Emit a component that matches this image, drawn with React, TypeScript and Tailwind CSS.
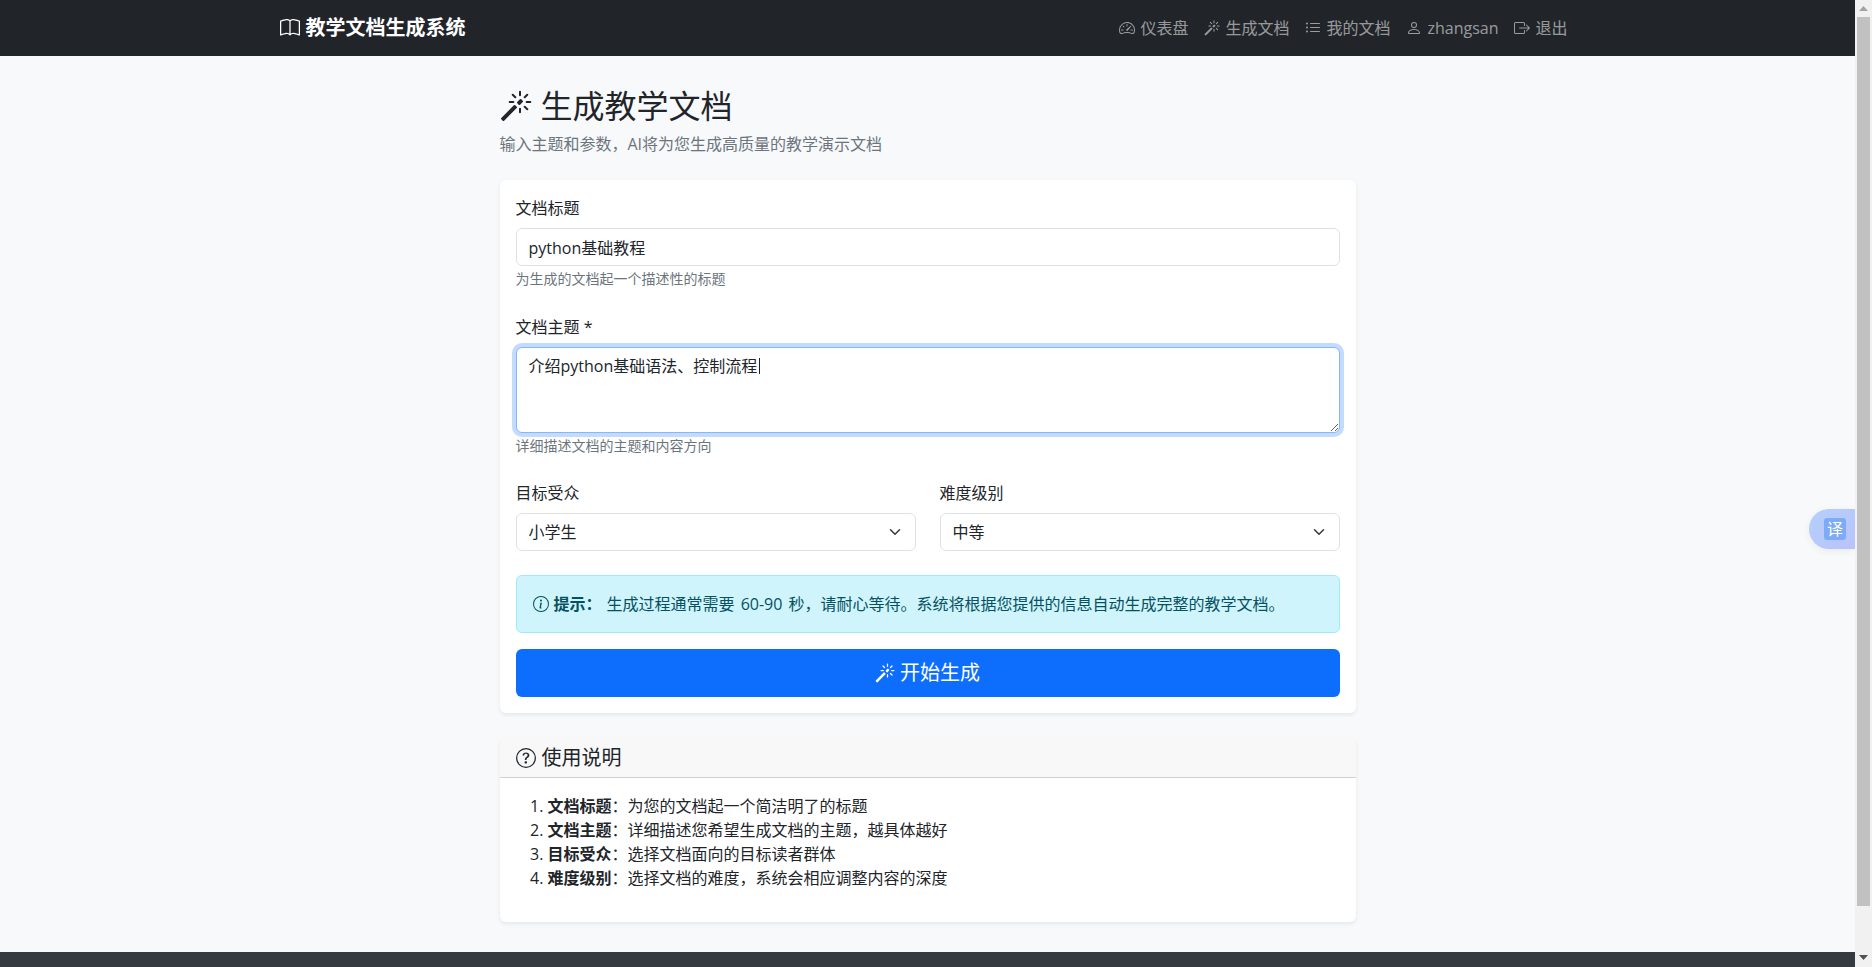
import { BsBook, BsSpeedometer2, BsMagic, BsListUl, BsPerson, BsBoxArrowRight, BsInfoCircle, BsQuestionCircle } from "react-icons/bs";

function NavLink({ icon, label }: { icon: React.ReactNode; label: string }) {
  return (
    <a className="flex items-center gap-[5px] p-2 text-[rgba(255,255,255,0.55)]">
      {icon}
      <span>{label}</span>
    </a>
  );
}

function Chevron() {
  return (
    <svg viewBox="0 0 16 16" className="pointer-events-none absolute right-[13px] top-[13px] h-3 w-4" fill="none" stroke="#343a40" strokeWidth="2" strokeLinecap="round" strokeLinejoin="round">
      <path d="m2 5 6 6 6-6" />
    </svg>
  );
}

function SelectField({ label, value }: { label: string; value: string }) {
  return (
    <div>
      <label className="mb-2 block">{label}</label>
      <div className="relative">
        <select defaultValue={value} className="block h-[38px] w-full appearance-none rounded-[6px] border border-[#dee2e6] bg-white pl-3 pr-9 text-[#212529] outline-none">
          <option>{value}</option>
        </select>
        <Chevron />
      </div>
    </div>
  );
}

export default function App() {
  return (
    <div className="flex h-screen w-full overflow-hidden bg-[#f8f9fa] font-['Open_Sans','Noto_Sans_CJK_SC',sans-serif] text-base leading-6 text-[#212529]">
      <div className="relative flex min-w-0 flex-1 flex-col overflow-hidden">
        <nav className="flex h-14 shrink-0 items-center justify-between bg-[#212529] pl-[279.5px] pr-[279.5px]">
          <a className="flex items-center gap-[6px] text-xl font-bold text-white">
            <BsBook size={20} />
            <span>教学文档生成系统</span>
          </a>
          <div className="flex items-center">
            <NavLink icon={<BsSpeedometer2 size={16} />} label="仪表盘" />
            <NavLink icon={<BsMagic size={16} />} label="生成文档" />
            <NavLink icon={<BsListUl size={16} />} label="我的文档" />
            <NavLink icon={<BsPerson size={16} />} label="zhangsan" />
            <NavLink icon={<BsBoxArrowRight size={16} />} label="退出" />
          </div>
        </nav>

        <main className="mx-auto w-[856px] shrink-0 pt-[26px]">
          <h2 className="flex h-[48px] items-center gap-[9px] text-[32px] font-normal leading-[48px]">
            <BsMagic size={32} />
            <span>生成教学文档</span>
          </h2>
          <p className="mt-[2px] text-[#6c757d]">输入主题和参数，AI将为您生成高质量的教学演示文档</p>

          <section className="mt-6 rounded-[6px] bg-white p-4 shadow-[0_2px_4px_rgba(0,0,0,0.075)]">
            <label className="mb-2 block">文档标题</label>
            <input defaultValue="python基础教程" className="block h-[38px] w-full rounded-[6px] border border-[#dee2e6] bg-white px-3 text-[#212529] outline-none" />
            <div className="mt-[2px] text-sm leading-[21px] text-[#6c757d]">为生成的文档起一个描述性的标题</div>

            <label className="mb-2 mt-[26px] block">文档主题 *</label>
            <div className="relative">
              <textarea rows={3} defaultValue="介绍python基础语法、控制流程" className="block h-[86px] w-full rounded-[6px] border border-[#86b7fe] bg-white px-3 py-[6px] text-[#212529] shadow-[0_0_0_4px_rgba(13,110,253,0.25)] outline-none" />
              <span className="absolute left-[243px] top-[11px] h-4 w-px bg-[#212529]" />
            </div>
            <div className="mt-[2px] text-sm leading-[21px] text-[#6c757d]">详细描述文档的主题和内容方向</div>

            <div className="mt-[25px] grid grid-cols-2 gap-6">
              <SelectField label="目标受众" value="小学生" />
              <SelectField label="难度级别" value="中等" />
            </div>

            <div className="mt-6 flex h-[58px] items-center rounded-[6px] border border-[#9eeaf9] bg-[#cff4fc] px-4 text-[#055160]">
              <BsInfoCircle size={16} />
              <strong className="ml-[5px] mr-[5px] font-bold">提示：</strong>
              <span className="[word-spacing:2px]">生成过程通常需要 60-90 秒，请耐心等待。系统将根据您提供的信息自动生成完整的教学文档。</span>
            </div>

            <button className="mt-4 flex h-12 w-full items-center justify-center gap-[5px] rounded-[6px] bg-[#0d6efd] text-xl text-white">
              <BsMagic size={20} />
              <span>开始生成</span>
            </button>
          </section>

          <section className="mt-6 overflow-hidden rounded-[6px] bg-white shadow-[0_2px_4px_rgba(0,0,0,0.075)]">
            <div className="flex h-[41px] items-center gap-[6px] border-b border-[#cfd0d1] bg-[#f8f8f8] px-4 pt-px text-xl">
              <BsQuestionCircle size={20} />
              <span>使用说明</span>
            </div>
            <div className="p-4">
              <ol className="mb-4 list-decimal pl-8">
                <li><strong>文档标题</strong>：为您的文档起一个简洁明了的标题</li>
                <li><strong>文档主题</strong>：详细描述您希望生成文档的主题，越具体越好</li>
                <li><strong>目标受众</strong>：选择文档面向的目标读者群体</li>
                <li><strong>难度级别</strong>：选择文档的难度，系统会相应调整内容的深度</li>
              </ol>
            </div>
          </section>
        </main>

        <footer className="mt-[30px] h-[120px] shrink-0 bg-[#343a40]" />

        <div className="absolute right-0 top-[509px] flex h-10 w-[46px] items-center rounded-l-[20px] bg-gradient-to-br from-[#b4d0fb] to-[#bac2fb] pl-[15px] shadow-[0_2px_8px_rgba(0,0,0,0.06)]">
          <span className="flex h-[22px] w-[22px] items-center justify-center rounded-[3px] bg-[#7dabf6] text-base leading-none text-white">译</span>
        </div>
      </div>

      <div className="flex w-[17px] shrink-0 flex-col items-center bg-[#f1f1f1]">
        <svg viewBox="0 0 9 5" className="mt-[6px] h-[5px] w-[9px]"><path d="M4.5 0 9 5H0z" fill="#a3a3a3" /></svg>
        <div className="mt-[6px] h-[889px] w-[13px] bg-[#c1c1c1]" />
        <svg viewBox="0 0 9 5" className="mt-[49px] h-[5px] w-[9px]"><path d="M0 0h9L4.5 5z" fill="#505050" /></svg>
      </div>
    </div>
  );
}
